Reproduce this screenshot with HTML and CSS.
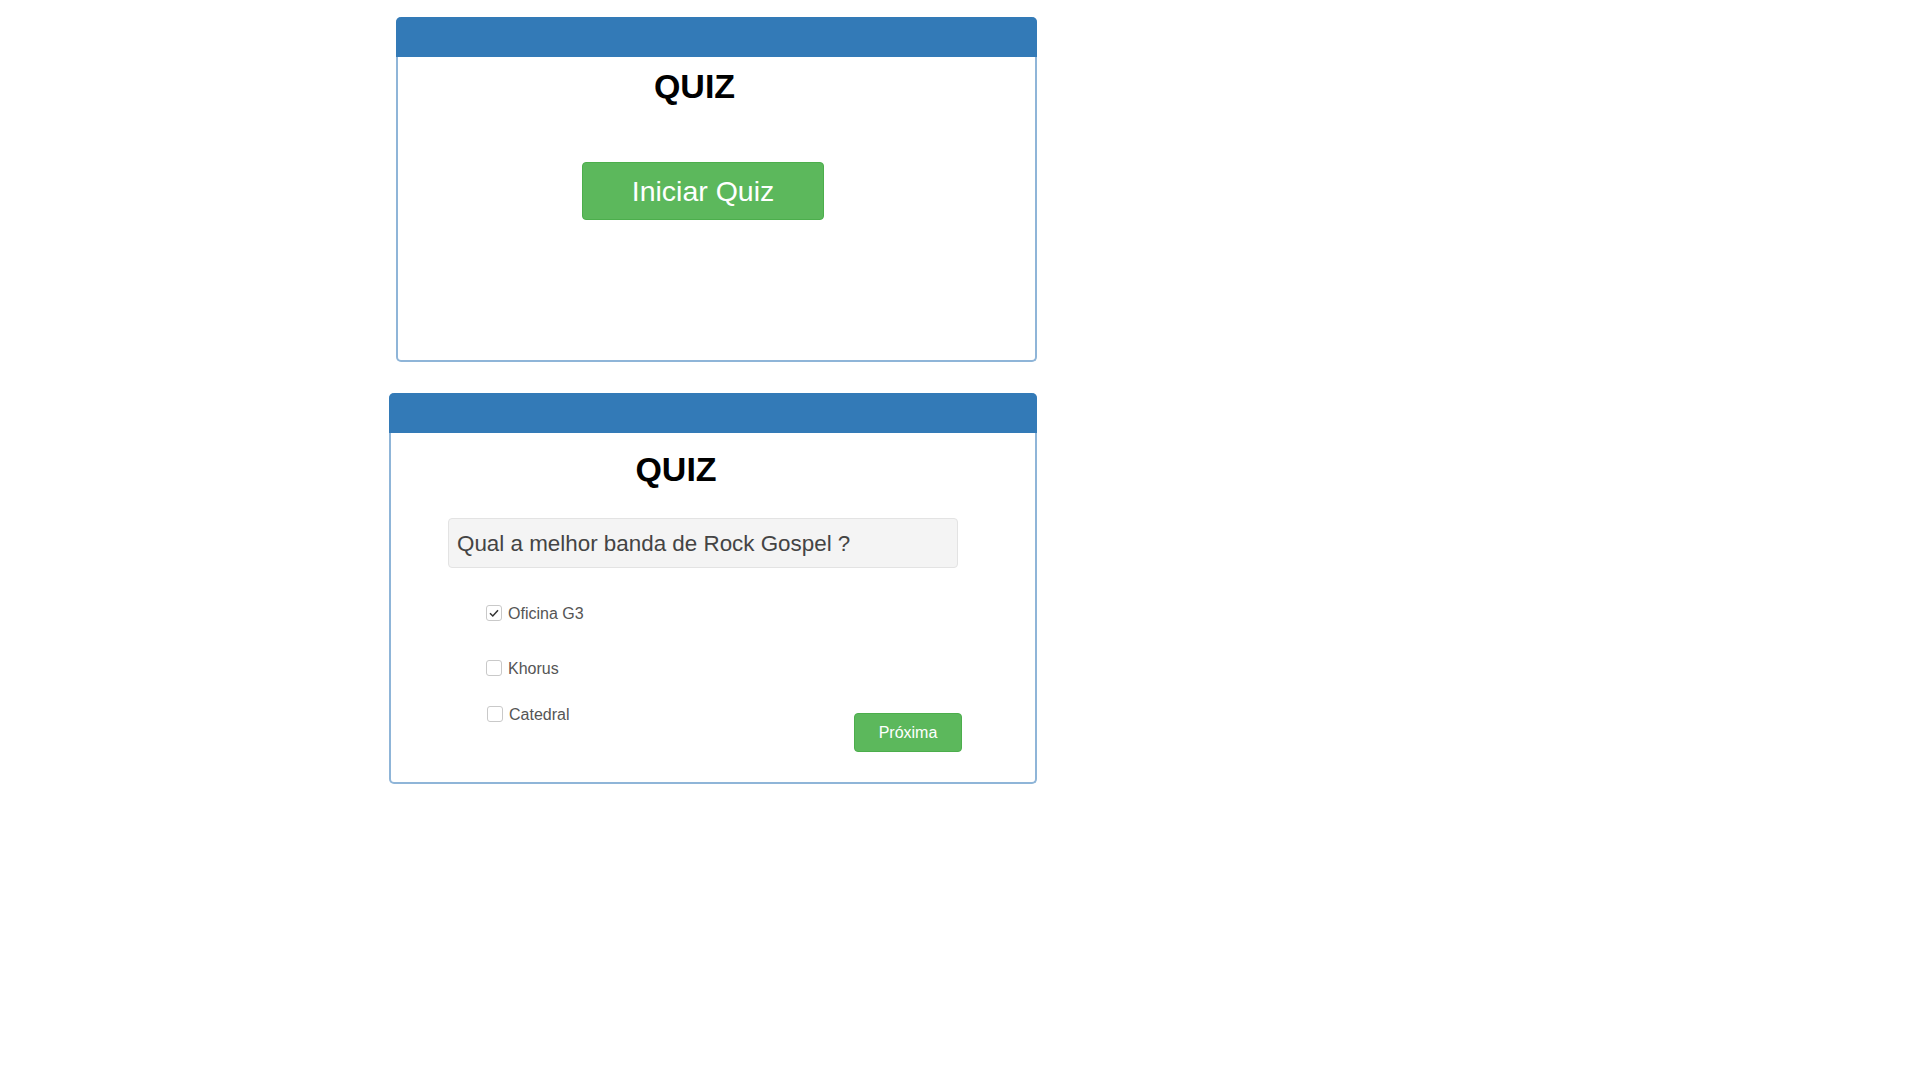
FILE: index.html
```html
<!DOCTYPE html>
<html lang="pt">
<head>
<meta charset="utf-8">
<title>Quiz</title>
<link rel="stylesheet" href="styles.css">
</head>
<body>
<div class="page">
  <section class="card card-start">
    <div class="card-head"></div>
    <div class="card-body">
      <h1 class="title title-start">QUIZ</h1>
      <button class="btn btn-start" type="button">Iniciar Quiz</button>
    </div>
  </section>

  <section class="card card-quiz">
    <div class="card-head"></div>
    <div class="card-body">
      <h1 class="title title-quiz">QUIZ</h1>
      <div class="question">Qual a melhor banda de Rock Gospel ?</div>
      <div class="options">
        <label class="option opt-1">
          <span class="box checked"><svg width="14" height="14" viewBox="0 0 14 14"><path d="M3 7.2 L5.8 10 L11 4.2" fill="none" stroke="#333" stroke-width="1.5"/></svg></span>
          <span class="opt-text">Oficina G3</span>
        </label>
        <label class="option opt-2">
          <span class="box"></span>
          <span class="opt-text">Khorus</span>
        </label>
        <div class="last-row">
          <label class="option opt-3">
            <span class="box"></span>
            <span class="opt-text">Catedral</span>
          </label>
          <button class="btn btn-next" type="button">Próxima</button>
        </div>
      </div>
    </div>
  </section>
</div>
</body>
</html>
```

FILE: styles.css
```css
html, body {
  margin: 0;
  padding: 0;
  background: #fff;
}

body {
  font-family: "Liberation Sans", Arial, Helvetica, sans-serif;
  color: #333;
}

.page {
  padding-top: 17px;
  display: flex;
  flex-direction: column;
  align-items: flex-start;
}

.card {
  box-sizing: border-box;
  border: 2px solid #8fb5d8;
  border-top: none;
  border-radius: 5px;
  background: #fff;
}

.card-start {
  margin-left: 396px;
  width: 641px;
  height: 345px;
}

.card-quiz {
  margin-left: 389px;
  margin-top: 31px;
  width: 648px;
  height: 391px;
}

.card-head {
  height: 40px;
  margin: 0 -2px;
  background: #337ab7;
  border-radius: 5px 5px 0 0;
}

.card-body {
  display: flex;
  flex-direction: column;
  align-items: flex-start;
}

.title {
  margin: 0;
  font-size: 34px;
  line-height: 34px;
  font-weight: bold;
  color: #000;
  text-align: center;
  align-self: stretch;
}

.title-start {
  margin-top: 11.5px;
  padding-right: 44px;
}

.title-quiz {
  margin-top: 19px;
  padding-right: 74px;
}

.btn {
  font-family: "Liberation Sans", Arial, Helvetica, sans-serif;
  border: 1px solid #4cae4c;
  background: #5cb85c;
  color: #fff;
  border-radius: 4px;
  padding: 0;
  cursor: pointer;
}

.btn-start {
  margin-top: 59.5px;
  margin-left: 184px;
  width: 242px;
  height: 58px;
  font-size: 28.5px;
  line-height: 56px;
}

.question {
  box-sizing: border-box;
  margin-top: 32px;
  margin-left: 57px;
  width: 510px;
  height: 50px;
  padding: 2px 8px 0;
  font-size: 22.4px;
  line-height: 46px;
  color: #444;
  background: #f4f4f4;
  border: 1px solid #e3e3e3;
  border-radius: 4px;
}

.options {
  margin-top: 37px;
  margin-left: 95px;
  display: flex;
  flex-direction: column;
  align-self: stretch;
}

.option {
  display: flex;
  align-items: center;
  height: 18px;
  font-size: 16px;
  line-height: 18px;
  color: #555;
}

.opt-2 {
  margin-top: 37px;
}

.last-row {
  margin-top: 28px;
  display: flex;
  align-items: flex-start;
  padding-right: 73px;
}

.opt-3 .box {
  margin-left: 1px;
}

.box {
  box-sizing: border-box;
  width: 16px;
  height: 16px;
  margin-top: -2px;
  margin-right: 6px;
  border: 1px solid #c9c9c9;
  border-radius: 3px;
  background: #fff;
  display: flex;
  align-items: center;
  justify-content: center;
}

.btn-next {
  margin-left: auto;
  margin-top: 7px;
  width: 108px;
  height: 39px;
  font-size: 16px;
  line-height: 37px;
}
```
